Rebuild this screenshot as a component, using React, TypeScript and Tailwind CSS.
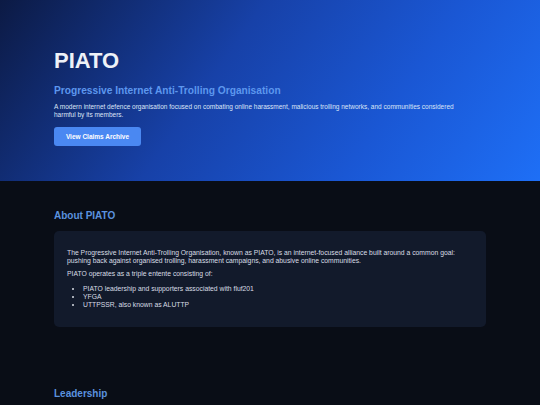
export default function App() {
  return (
    <div
      className="min-h-screen bg-[#090d16] text-[#d6dbe4]"
      style={{ fontFamily: '"Liberation Sans", Arial, sans-serif' }}
    >
      <header className="bg-[linear-gradient(125deg,#0c1a44_0%,#1741a8_40%,#1a57d4_70%,#1e6ff6_100%)] px-[54px] pt-[48px] pb-[35px]">
        <h1 className="text-[22px] leading-[26px] font-bold text-[#eef2f8]">PIATO</h1>
        <h2 className="mt-[11px] text-[10.2px] leading-[12px] font-bold text-[#5d97ee]">
          Progressive Internet Anti-Trolling Organisation
        </h2>
        <p className="mt-[6px] max-w-[415px] text-[6.5px] leading-[8px] text-[#dce5f7]">
          A modern internet defence organisation focused on combating online harassment, malicious
          trolling networks, and communities considered harmful by its members.
        </p>
        <button className="mt-[8px] flex h-[19px] w-[87px] items-center justify-center rounded-[3px] bg-[#4a88f2] text-[6.5px] font-bold text-white">
          View Claims Archive
        </button>
      </header>

      <section className="px-[54px] pt-[29px]">
        <h2 className="text-[10px] leading-[12px] font-bold text-[#5b92df]">About PIATO</h2>
        <div className="mt-[9px] rounded-[5px] bg-[#121a2b] px-[13px] pt-[18px] pb-[19px] text-[6.8px] leading-[7.7px] text-[#d8dde5]">
          <p>
            The Progressive Internet Anti-Trolling Organisation, known as PIATO, is an internet-focused
            alliance built around a common goal: pushing back against organised trolling, harassment
            campaigns, and abusive online communities.
          </p>
          <p className="mt-[6px]">PIATO operates as a triple entente consisting of:</p>
          <ul className="mt-[7px] list-disc pl-[16px]">
            <li>PIATO leadership and supporters associated with fluf201</li>
            <li>YFGA</li>
            <li>UTTPSSR, also known as ALUTTP</li>
          </ul>
        </div>
      </section>

      <section className="px-[54px] pt-[61px] pb-[40px]">
        <h2 className="text-[10px] leading-[12px] font-bold text-[#5b92df]">Leadership</h2>
      </section>
    </div>
  );
}
